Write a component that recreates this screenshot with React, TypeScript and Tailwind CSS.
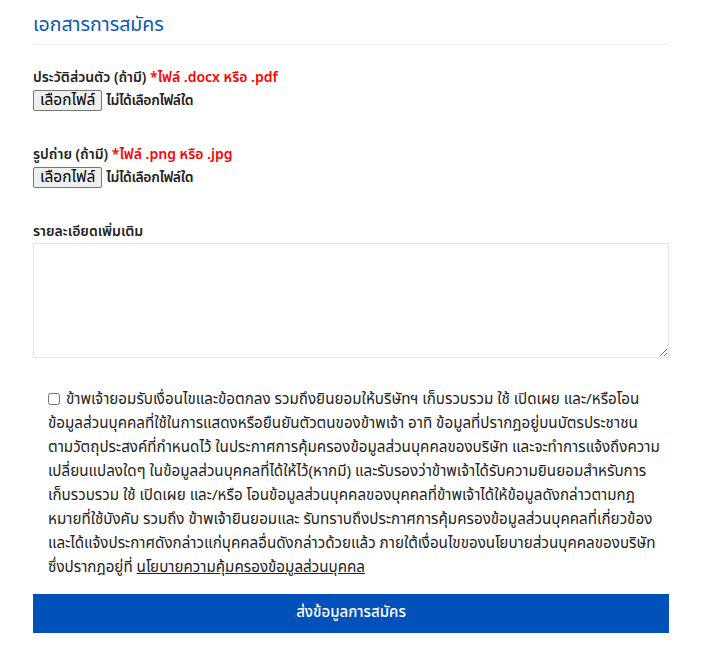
export default function App() {
	return (
		<div className="min-h-[670px] bg-white pl-[33px] pr-[51px] pt-[12px] text-[#222] [font-family:'Noto_Sans_Thai','Noto_Sans',sans-serif]">
			{/* หัวข้อ */}
			<h2 className="text-[19.5px] leading-[26px] text-[#0b57b9] pb-[6px] border-b border-[#f0f0f0]">เอกสารการสมัคร</h2>

			{/* ประวัติส่วนตัว */}
			<div className="mt-[22px]">
				<p className="text-[14px] leading-[22px] font-semibold">
					ประวัติส่วนตัว (ถ้ามี) <span className="text-[#ff0000]">*ไฟล์ .docx หรือ .pdf</span>
				</p>
				<div className="flex items-center gap-[4px] h-[22px]">
					<button className="h-[21px] px-[6px] text-[15.5px] leading-[17px] bg-[#efefef] border border-[#767676] rounded-[2px] text-black">เลือกไฟล์</button>
					<span className="text-[14px] tracking-[-0.4px] font-semibold">ไม่ได้เลือกไฟล์ใด</span>
				</div>
			</div>

			{/* รูปถ่าย */}
			<div className="mt-[33px]">
				<p className="text-[14px] leading-[22px] font-semibold">
					รูปถ่าย (ถ้ามี) <span className="text-[#ff0000]">*ไฟล์ .png หรือ .jpg</span>
				</p>
				<div className="flex items-center gap-[4px] h-[22px]">
					<button className="h-[21px] px-[6px] text-[15.5px] leading-[17px] bg-[#efefef] border border-[#767676] rounded-[2px] text-black">เลือกไฟล์</button>
					<span className="text-[14px] tracking-[-0.4px] font-semibold">ไม่ได้เลือกไฟล์ใด</span>
				</div>
			</div>

			{/* รายละเอียดเพิ่มเติม */}
			<div className="mt-[33px]">
				<p className="text-[14px] leading-[22px] font-semibold">รายละเอียดเพิ่มเติม</p>
				<textarea className="block w-full h-[115px] border border-[#e5e5e5] bg-white"></textarea>
			</div>

			{/* ยินยอม */}
			<div className="mt-[30px] pl-[15px] text-[15.2px] leading-[24px] whitespace-nowrap">
				<input type="checkbox" className="mr-[6px] align-[-1px] w-[12px] h-[12px]" />
				ข้าพเจ้ายอมรับเงื่อนไขและข้อตกลง รวมถึงยินยอมให้บริษัทฯ เก็บรวบรวม ใช้ เปิดเผย และ/หรือโอน<br />
				ข้อมูลส่วนบุคคลที่ใช้ในการแสดงหรือยืนยันตัวตนของข้าพเจ้า อาทิ ข้อมูลที่ปรากฎอยู่บนบัตรประชาชน<br />
				ตามวัตถุประสงค์ที่กำหนดไว้ ในประกาศการคุ้มครองข้อมูลส่วนบุคคลของบริษัท และจะทำการแจ้งถึงความ<br />
				เปลี่ยนแปลงใดๆ ในข้อมูลส่วนบุคคลที่ได้ให้ไว้(หากมี) และรับรองว่าข้าพเจ้าได้รับความยินยอมสำหรับการ<br />
				เก็บรวบรวม ใช้ เปิดเผย และ/หรือ โอนข้อมูลส่วนบุคคลของบุคคลที่ข้าพเจ้าได้ให้ข้อมูลดังกล่าวตามกฎ<br />
				หมายที่ใช้บังคับ รวมถึง ข้าพเจ้ายินยอมและ รับทราบถึงประกาศการคุ้มครองข้อมูลส่วนบุคคลที่เกี่ยวข้อง<br />
				และได้แจ้งประกาศดังกล่าวแก่บุคคลอื่นดังกล่าวด้วยแล้ว ภายใต้เงื่อนไขของนโยบายส่วนบุคคลของบริษัท<br />
				ซึ่งปรากฎอยู่ที่ <a className="underline">นโยบายความคุ้มครองข้อมูลส่วนบุคคล</a>
			</div>

			{/* ปุ่มส่ง */}
			<button className="mt-[14px] w-full h-[39px] bg-[#0051b9] text-white text-[15px] font-medium">ส่งข้อมูลการสมัคร</button>
		</div>
	)
}
